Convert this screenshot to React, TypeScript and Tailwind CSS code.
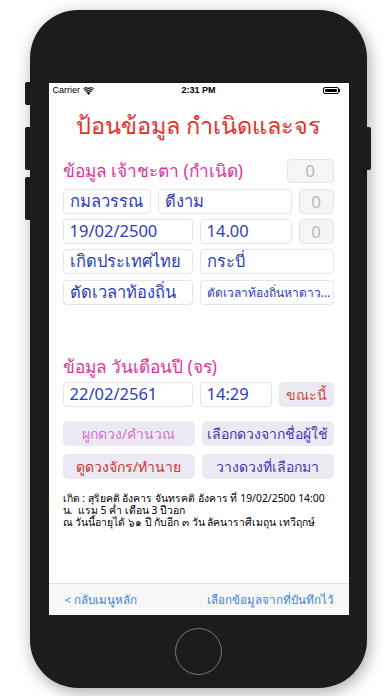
const font = { fontFamily: '"Noto Sans", "Liberation Sans", sans-serif' };

function Field({ w, children, small }: { w: string; children: React.ReactNode; small?: boolean }) {
  return (
    <div
      className={`${w} h-[25px] flex items-center px-[6px] rounded-[4px] border border-[#e6e6e6] bg-white text-[#2b3dbd] overflow-hidden whitespace-nowrap ${
        small ? "text-[12px]" : "text-[16.5px]"
      }`}
    >
      {children}
    </div>
  );
}

function Zero() {
  return (
    <div className="w-[35px] h-[25px] flex items-center justify-center rounded-[4px] border border-[#e6e6e6] bg-[#f5f5f5] text-[#b8b8b8] text-[17px]">
      0
    </div>
  );
}

function Btn({ color, children }: { color: string; children: React.ReactNode }) {
  return (
    <div className={`h-[25px] flex-1 flex items-center justify-center rounded-[5px] bg-[#ebeaf2] text-[14px] ${color}`}>
      {children}
    </div>
  );
}

function WifiIcon() {
  return (
    <svg width="11" height="8" viewBox="0 0 22 16">
      <path d="M11 16 L7.2 11.6 A6 6 0 0 1 14.8 11.6 Z" fill="black" />
      <path d="M4.6 8.6 A10 10 0 0 1 17.4 8.6 L15.8 10.5 A7.6 7.6 0 0 0 6.2 10.5 Z" fill="black" />
      <path d="M1.8 5.4 A14.2 14.2 0 0 1 20.2 5.4 L18.6 7.3 A11.8 11.8 0 0 0 3.4 7.3 Z" fill="black" />
      <path d="M0 3 A17 17 0 0 1 22 3 L21 4.2 A15.6 15.6 0 0 0 1 4.2 Z" fill="black" />
    </svg>
  );
}

export default function App() {
  return (
    <div className="w-[392px] h-[696px] bg-white flex pl-[30px] pt-[10px] overflow-hidden" style={font}>
      {/* phone body */}
      <div className="relative w-[337px] h-[678px] rounded-[48px] bg-[#1c1c1c] shadow-[2px_4px_16px_rgba(0,0,0,0.35)] flex flex-col items-center">
        {/* side buttons */}
        <div className="absolute left-[-5px] top-[72px] w-[5px] h-[23px] rounded-l-[2px] bg-[#1c1c1c]" />
        <div className="absolute left-[-5px] top-[117px] w-[5px] h-[43px] rounded-l-[2px] bg-[#1c1c1c]" />
        <div className="absolute left-[-5px] top-[167px] w-[5px] h-[43px] rounded-l-[2px] bg-[#1c1c1c]" />
        <div className="absolute right-[-4px] top-[117px] w-[4px] h-[43px] rounded-r-[2px] bg-[#1c1c1c]" />

        {/* screen */}
        <div className="mt-[73px] w-[300px] h-[532px] bg-white flex flex-col">
          {/* status bar */}
          <div className="h-[13px] mt-[1px] flex items-center justify-between px-[4px] text-[9px] text-black" style={{ fontFamily: '"Liberation Sans", sans-serif' }}>
            <div className="flex items-center gap-[3px] w-[80px]">
              <span>Carrier</span>
              <WifiIcon />
            </div>
            <span className="font-semibold">2:31 PM</span>
            <div className="w-[80px] flex justify-end pr-[4px]">
              <div className="flex items-center">
                <div className="w-[16px] h-[7px] border border-black rounded-[2px] p-[1px]">
                  <div className="w-full h-full bg-black rounded-[1px]" />
                </div>
                <div className="w-[1px] h-[3px] bg-black" />
              </div>
            </div>
          </div>

          {/* title */}
          <div className="h-[57px] flex items-center justify-center text-[23.5px] text-[#e5322a]">
            ป้อนข้อมูล กำเนิดและจร
          </div>

          <div className="px-[14px] pr-[15px] flex flex-col">
            {/* section 1 */}
            <div className="h-[24px] mt-[5px] flex items-center justify-between">
              <span className="text-[17.3px] text-[#e0329e]">ข้อมูล เจ้าชะตา (กำเนิด)</span>
              <div className="w-[47px] h-[24px] flex items-center justify-center rounded-[4px] border border-[#e6e6e6] bg-[#f5f5f5] text-[#b8b8b8] text-[17px]">
                0
              </div>
            </div>

            <div className="mt-[6px] flex items-center gap-[7px]">
              <Field w="w-[88px]">กมลวรรณ</Field>
              <Field w="w-[134px]">ดีงาม</Field>
              <Zero />
            </div>

            <div className="mt-[5px] flex items-center gap-[7px]">
              <Field w="w-[130px]">19/02/2500</Field>
              <Field w="w-[92px]">14.00</Field>
              <Zero />
            </div>

            <div className="mt-[5px] flex items-center gap-[7px]">
              <Field w="w-[130px]">เกิดประเทศไทย</Field>
              <Field w="w-[134px]">กระบี่</Field>
            </div>

            <div className="mt-[6px] flex items-center gap-[7px]">
              <Field w="w-[130px]">ตัดเวลาท้องถิ่น</Field>
              <Field w="w-[134px]" small>ตัดเวลาท้องถิ่นหาดาว...</Field>
            </div>

            {/* section 2 */}
            <div className="h-[24px] mt-[50px] flex items-center">
              <span className="text-[17.3px] text-[#e0329e]">ข้อมูล วันเดือนปี (จร)</span>
            </div>

            <div className="mt-[3px] flex items-center gap-[7px]">
              <Field w="w-[130px]">22/02/2561</Field>
              <Field w="w-[72px]">14:29</Field>
              <div className="w-[55px] h-[25px] flex items-center justify-center rounded-[5px] bg-[#ebeaf2] text-[14px] text-[#cf4a3a]">
                ขณะนี้
              </div>
            </div>

            {/* buttons */}
            <div className="mt-[14px] flex gap-[7px]">
              <Btn color="text-[#dc6fd4]">ผูกดวง/คำนวณ</Btn>
              <Btn color="text-[#4636b4]">เลือกดวงจากชื่อผู้ใช้</Btn>
            </div>
            <div className="mt-[8px] flex gap-[7px]">
              <Btn color="text-[#d4302c]">ดูดวงจักร/ทำนาย</Btn>
              <Btn color="text-[#4636b4]">วางดวงที่เลือกมา</Btn>
            </div>

            {/* info */}
            <div className="mt-[13px] text-[10.4px] leading-[12px] text-black whitespace-nowrap">
              <div>เกิด : สุริยคติ อังคาร จันทรคติ อังคาร ที่ 19/02/2500 14:00</div>
              <div>น.&nbsp; แรม 5 ค่ำ เดือน 3 ปีวอก</div>
              <div>ณ วันนี้อายุได้ ๖๑ ปี กับอีก ๓ วัน ลัคนาราศีเมถุน เทวีฤกษ์</div>
            </div>
          </div>

          <div className="flex-1" />

          {/* toolbar */}
          <div className="h-[32px] border-t border-[#e2e2e2] bg-[#f7f7f7] flex items-center justify-between pl-[16px] pr-[15px] text-[11.6px] text-[#3b82d6]">
            <span>&lt; กลับเมนูหลัก</span>
            <span>เลือกข้อมูลจากที่บันทึกไว้</span>
          </div>
        </div>

        {/* home button */}
        <div className="flex-1 flex items-center justify-center">
          <div className="w-[47px] h-[47px] rounded-full border-[1.5px] border-[#7a7a7a]" />
        </div>
      </div>
    </div>
  );
}
